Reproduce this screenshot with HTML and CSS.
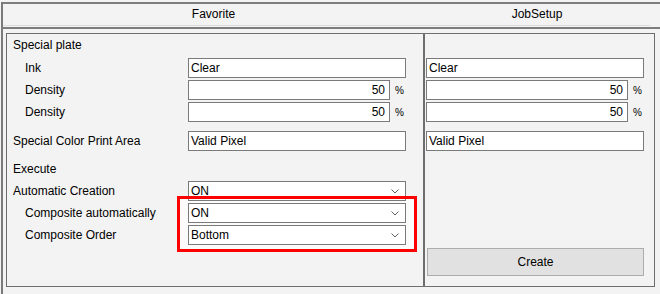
FILE: index.html
```html
<!DOCTYPE html>
<html lang="en">
  <head>
    <meta charset="UTF-8" />
    <title>Special plate settings</title>
    <link rel="stylesheet" href="styles.css">
  </head>
  <body>
    <div class="window">
      <div class="tabs">
        <div class="tab tab-fav">Favorite</div>
        <div class="tab tab-job">JobSetup</div>
      </div>
      <div class="panels">
        <section class="panel panel-fav">
          <div class="highlight-fill"></div>
          <div class="heading">Special plate</div>
          <div class="row sub"><span class="label">Ink</span><span class="box">Clear</span></div>
          <div class="row sub"><span class="label">Density</span><span class="box num">50</span><span class="pct">%</span></div>
          <div class="row sub"><span class="label">Density</span><span class="box num">50</span><span class="pct">%</span></div>
          <div class="row area"><span class="label">Special Color Print Area</span><span class="box">Valid Pixel</span></div>
          <div class="row execute"><span class="label">Execute</span></div>
          <div class="row"><span class="label">Automatic Creation</span><span class="box combo">ON<svg class="chev" width="8" height="5" viewBox="0 0 8 5"><polyline points="0.5,0.5 4,4 7.5,0.5" /></svg></span></div>
          <div class="row sub"><span class="label">Composite automatically</span><span class="box combo">ON<svg class="chev" width="8" height="5" viewBox="0 0 8 5"><polyline points="0.5,0.5 4,4 7.5,0.5" /></svg></span></div>
          <div class="row sub"><span class="label">Composite Order</span><span class="box combo">Bottom<svg class="chev" width="8" height="5" viewBox="0 0 8 5"><polyline points="0.5,0.5 4,4 7.5,0.5" /></svg></span></div>
          <div class="highlight"></div>
        </section>
        <section class="panel panel-job">
          <div class="heading"></div>
          <div class="row"><span class="box">Clear</span></div>
          <div class="row"><span class="box num">50</span><span class="pct">%</span></div>
          <div class="row"><span class="box num">50</span><span class="pct">%</span></div>
          <div class="row area"><span class="box">Valid Pixel</span></div>
          <button class="create">Create</button>
        </section>
      </div>
    </div>
  </body>
</html>
```

FILE: styles.css
```css
* {
  box-sizing: border-box;
}
body {
  margin: 0;
  background-color: #f3f3f3;
  font-family: "Liberation Sans", Arial, sans-serif;
  font-size: 12px;
  color: #000;
  overflow: hidden;
}
.window {
  margin-left: 1px;
  height: 294px;
  border-left: 2px solid #7a7a7a;
}
.tabs {
  display: grid;
  grid-template-columns: 421px 226px;
  margin-top: 2px;
  padding-bottom: 1px;
  border-top: 2px solid #7d7d7d;
  border-bottom: 2px solid #7d7d7d;
}
.tab {
  height: 22px;
  line-height: 21px;
  text-align: center;
  border-bottom: 1px solid #dcdcdc;
}
.panels {
  display: flex;
  margin: 4px 0 0 3px;
}
.panel {
  position: relative;
  display: flex;
  flex-direction: column;
  height: 254px;
  border: 1px solid #6e6e6e;
}
.panel-fav {
  width: 418px;
  padding-left: 6px;
}
.panel-job {
  width: 231px;
  padding-left: 1px;
}
.heading {
  height: 22px;
  line-height: 22px;
}
.row {
  position: relative;
  z-index: 1;
  display: flex;
  align-items: center;
  height: 20px;
  margin-top: 2px;
}
.row.area {
  margin-top: 9px;
}
.row.execute {
  margin-top: 8px;
}
.label {
  width: 175px;
  white-space: nowrap;
}
.sub .label {
  padding-left: 12px;
}
.box {
  display: flex;
  align-items: center;
  width: 218px;
  height: 20px;
  padding: 0 2px;
  background-color: #fff;
  border: 1px solid #7a7a7a;
}
.box.num {
  width: 202px;
  justify-content: flex-end;
  padding-right: 4px;
}
.pct {
  margin-left: 5px;
  font-size: 10px;
}
.combo {
  justify-content: space-between;
  padding-right: 6px;
}
.chev {
  fill: none;
  stroke: #5f5f5f;
  stroke-width: 1;
}
/* red annotation frame around the two composite rows */
.highlight,
.highlight-fill {
  position: absolute;
  left: 170px;
  top: 162px;
  width: 240px;
  height: 56px;
  pointer-events: none;
}
.highlight-fill {
  z-index: 0;
  background-color: #fbfbfb;
}
.highlight {
  z-index: 2;
  border: 3px solid #f00;
}
.create {
  width: 217px;
  height: 28px;
  margin: auto 0 10px 1px;
  padding: 0;
  font: inherit;
  color: #000;
  background-color: #e1e1e1;
  border: 1px solid #adadad;
}
```
